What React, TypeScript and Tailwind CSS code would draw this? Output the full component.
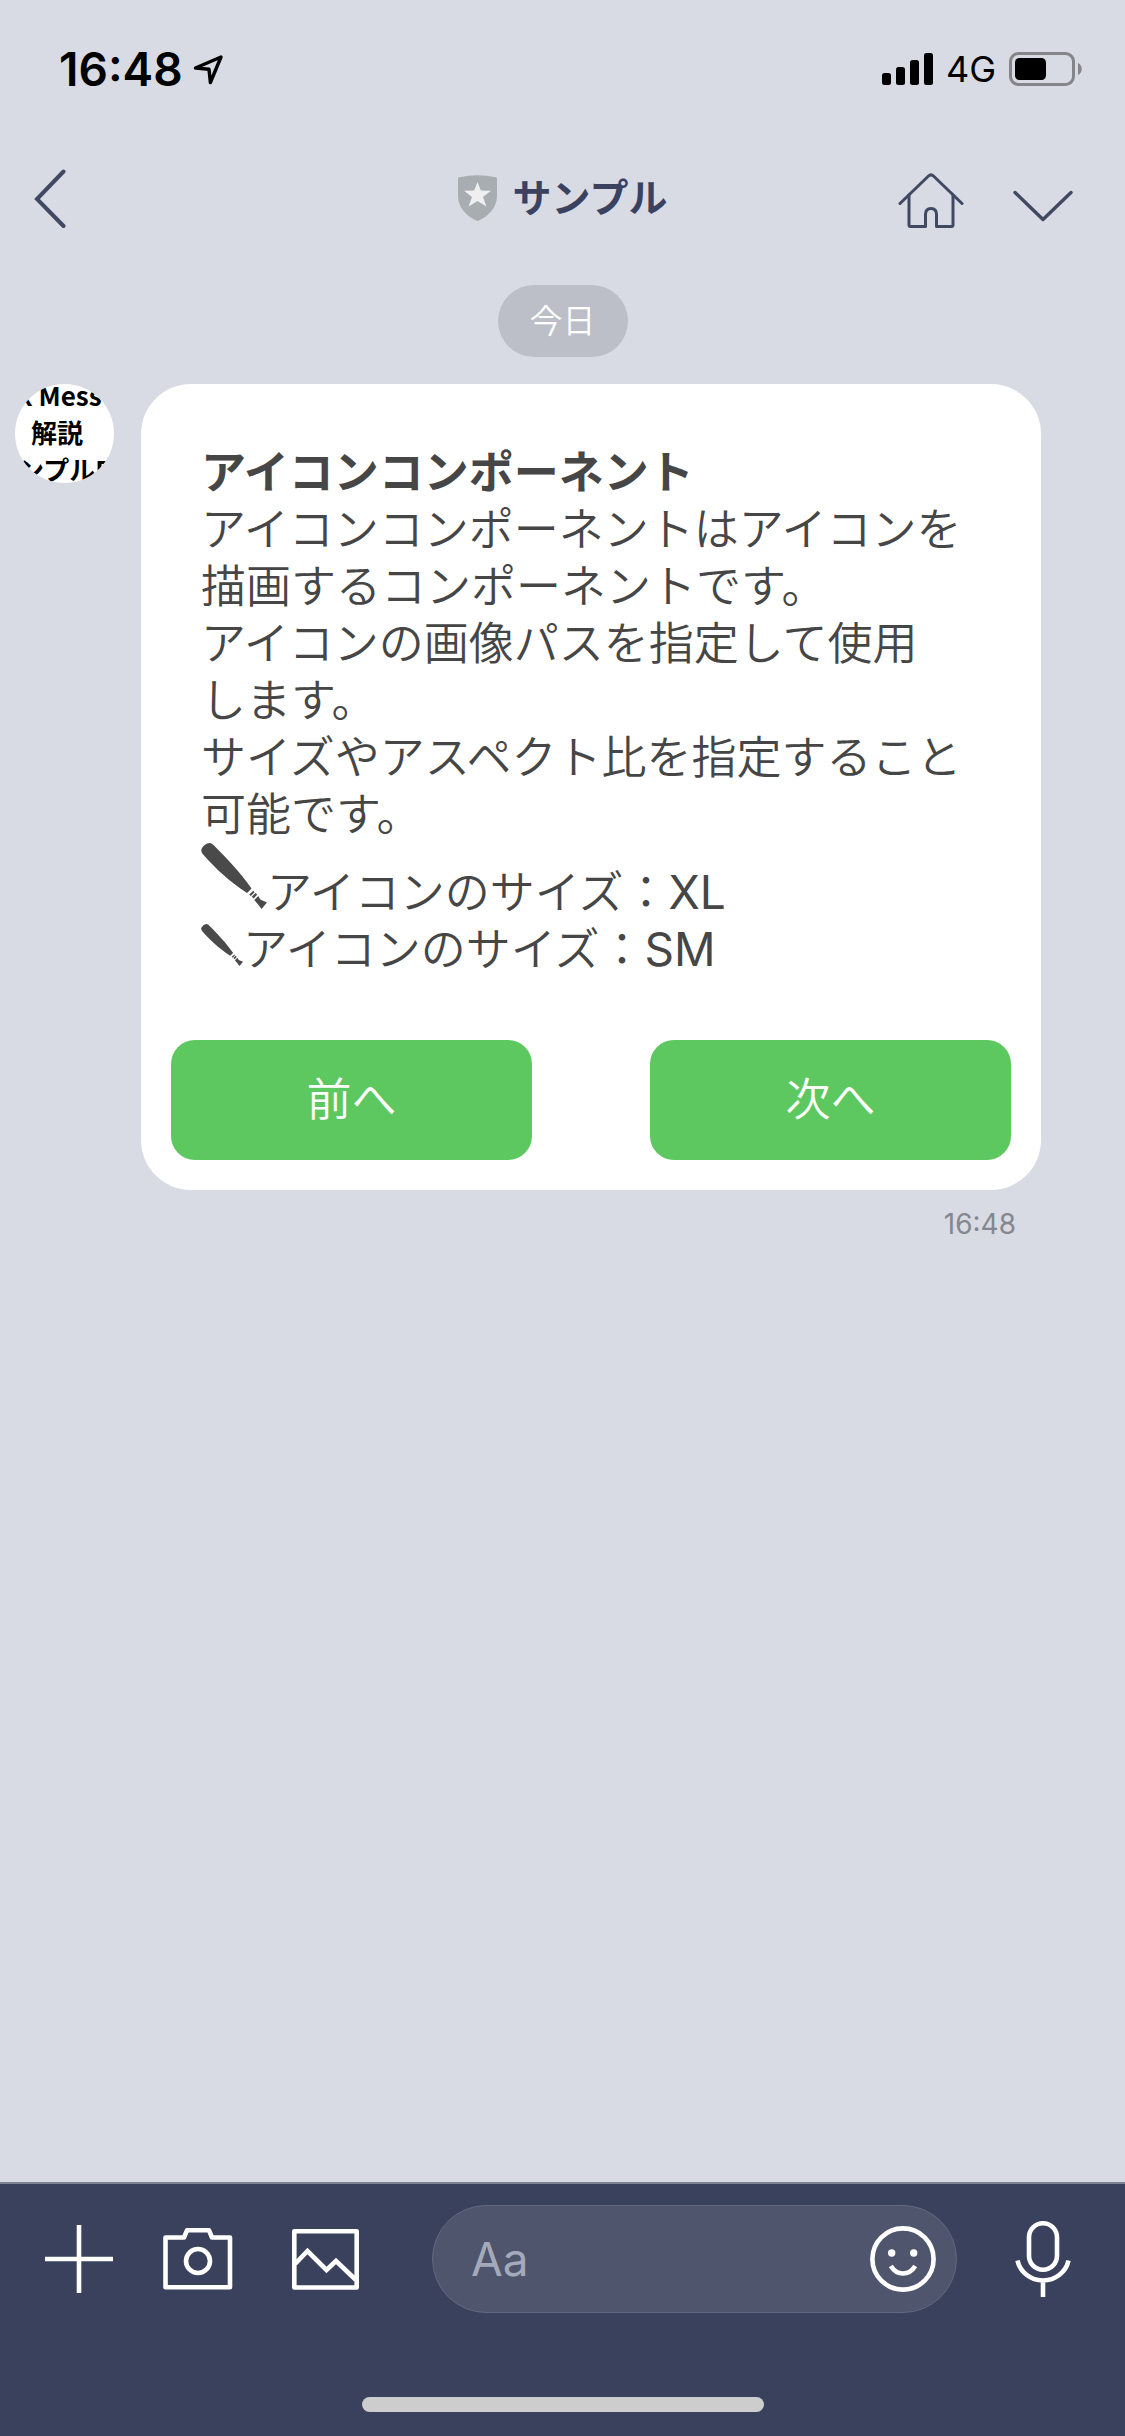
import type { ReactNode } from "react";

const LATIN_JP = "font-['Inter','Noto_Sans_CJK_JP',sans-serif]";

function LocationIcon() {
  return (
    <svg className="h-[31px] w-[31px]" viewBox="0 0 31 31" fill="none" stroke="#000" strokeWidth="3.4" strokeLinejoin="round" aria-hidden="true">
      <path d="M28 3 L2.500 14 L16 15.2 L17.4 28.500 Z" />
    </svg>
  );
}

function SignalIcon() {
  return (
    <svg className="h-[33px] w-[51px]" viewBox="0 0 51 33" aria-hidden="true">
      <rect x="0" y="20" width="9" height="12" rx="2.5" />
      <rect x="14" y="14" width="9" height="18" rx="2.5" />
      <rect x="28" y="7" width="9" height="25" rx="2.5" />
      <rect x="42" y="0" width="9" height="32" rx="2.5" />
    </svg>
  );
}

function BatteryIcon() {
  return (
    <svg className="h-[34px] w-[73px]" viewBox="0 0 73 34" aria-hidden="true">
      <rect x="1.5" y="1.5" width="63" height="31" rx="8" fill="none" stroke="#85868b" strokeWidth="3" />
      <rect x="6" y="6" width="31" height="22" rx="4.5" />
      <path d="M69 11 C74 13 74 21 69 23 Z" fill="#85868b" />
    </svg>
  );
}

function BackIcon() {
  return (
    <svg className="h-[60px] w-[32px]" viewBox="0 0 32 60" fill="none" stroke="#414862" strokeWidth="4" strokeLinecap="round" aria-hidden="true">
      <path d="M29.5 2.5 L3 30 L29.5 57" />
    </svg>
  );
}

function ShieldIcon() {
  return (
    <svg className="h-[46px] w-[39px]" viewBox="0 0 39 46" aria-hidden="true">
      <path d="M0 3.5 Q0 2.4 1.2 2.2 Q19.5 -1.8 37.8 2.2 Q39 2.4 39 3.5 V21 C39 33 30 41.5 19.5 46 C9 41.5 0 33 0 21 Z" fill="#a8adb1" />
      <path d="M19.5 7 L22.9 15.6 L33 15.8 L25 21.9 L28.4 31.5 L19.5 26.1 L10.6 31.5 L14 21.9 L6 15.8 L16.1 15.6 Z" fill="#efeff1" />
    </svg>
  );
}

function HomeIcon() {
  return (
    <svg className="h-[56px] w-[66px]" viewBox="0 0 66 56" fill="none" stroke="#414862" strokeWidth="3" strokeLinecap="round" strokeLinejoin="round" aria-hidden="true">
      <path d="M2 30.5 L30.5 3 Q33 0.7 35.5 3 L64 30.5" />
      <path d="M11 22 V52 Q11 53.5 12.5 53.5 H27.5 V41.5 Q27.5 35.5 33 35.5 Q38.5 35.5 38.5 41.5 V53.5 H53.5 Q55 53.5 55 52 V22" />
    </svg>
  );
}

function ChevronDownIcon() {
  return (
    <svg className="h-[32px] w-[60px]" viewBox="0 0 60 32" fill="none" stroke="#414862" strokeWidth="3.4" strokeLinecap="round" strokeLinejoin="round" aria-hidden="true">
      <path d="M2 2.5 L30 29.5 L58 2.5" />
    </svg>
  );
}

function BatIcon({ className }: { className: string }) {
  return (
    <svg className={"inline-block align-baseline " + className} viewBox="0 0 66 66" fill="#4a4a4a" aria-hidden="true">
      <path d="M3 12.5 Q-1 8.5 0.8 5.5 Q3.5 0.5 8.5 0 Q11 0 14 3.5 C28 18 39 29 50.5 45.5 L46 50 C28 38 15 26 3 12.5 Z" />
      <path d="M52.3 47.8 L53.6 49.2 L49.7 53 L48.3 51.6 Z" />
      <path d="M54.6 50 L56.2 51.8 L52.6 55.4 L50.8 53.6 Z" />
      <path d="M57.3 53 L59.3 56.6 L66 59.5 L60.5 66 L57.5 62 L53.3 57 Z" />
    </svg>
  );
}

function PlusIcon() {
  return (
    <svg className="size-[68px]" viewBox="0 0 68 68" stroke="#fff" strokeWidth="4.6" aria-hidden="true">
      <path d="M34 0 V68 M0 34 H68" />
    </svg>
  );
}

function CameraIcon() {
  return (
    <svg className="h-[62px] w-[70px]" viewBox="0 0 70 62" fill="none" stroke="#fff" strokeWidth="4.6" strokeLinejoin="round" aria-hidden="true">
      <path d="M2.5 9.5 H21 L24 2.3 H46 L49 9.5 H67 V59.3 H2.5 Z" />
      <circle cx="35" cy="33" r="12" />
    </svg>
  );
}

function PictureIcon() {
  return (
    <svg className="h-[61px] w-[67px]" viewBox="0 0 67 61" fill="none" stroke="#fff" strokeWidth="4.6" strokeLinejoin="round" aria-hidden="true">
      <path d="M2.3 2.3 H64.7 V58.5 H2.3 Z" />
      <path d="M3 35 L15.5 22 L34.5 41 L44 32 L64 51" strokeLinejoin="miter" />
    </svg>
  );
}

function SmileIcon() {
  return (
    <svg className="size-[66px]" viewBox="0 0 66 66" fill="none" stroke="#fff" strokeWidth="4.6" aria-hidden="true">
      <circle cx="33" cy="33" r="30.6" />
      <circle cx="21.7" cy="27" r="3.7" fill="#fff" stroke="none" />
      <circle cx="43.7" cy="27" r="3.7" fill="#fff" stroke="none" />
      <path d="M20.8 40 Q25.5 47.5 33 47.5 Q40.5 47.5 45.2 40" />
    </svg>
  );
}

function MicIcon() {
  return (
    <svg className="h-[76px] w-[56px]" viewBox="0 0 56 76" fill="none" stroke="#fff" strokeWidth="4.6" aria-hidden="true">
      <rect x="14" y="2.3" width="28" height="46.5" rx="14" />
      <path d="M2.500 39.500 C5 51 15.500 59.500 28 59.500 C40.500 59.500 51 51 53.500 39.500 M28 59.500 V76" />
    </svg>
  );
}

function StatusBar() {
  return (
    <div className="flex h-[132px] items-center justify-between pt-[6px] pr-[43px] pl-[59px]">
      <div className="flex items-center gap-[10px]">
        <time className="text-[46px] leading-[48px] font-semibold text-black">16:48</time>
        <LocationIcon />
      </div>
      <div className="flex items-center">
        <SignalIcon />
        <span className="ml-[13px] text-[36px] leading-[40px] text-black">4G</span>
        <span className="ml-[13px]">
          <BatteryIcon />
        </span>
      </div>
    </div>
  );
}

function ChatHeader() {
  return (
    <header className="grid h-[132px] grid-cols-[1fr_auto_1fr] items-center pr-[52px] pl-[34px]">
      <button type="button" aria-label="戻る" className="justify-self-start pt-[2px]">
        <BackIcon />
      </button>
      <div className="flex items-center gap-4 pl-[18px]">
        <ShieldIcon />
        <h1 className="text-[39px] leading-[48px] font-bold text-[#3a425f]">サンプル</h1>
      </div>
      <div className="flex items-center gap-[49px] justify-self-end">
        <button type="button" aria-label="ホーム" className="pt-[6px]">
          <HomeIcon />
        </button>
        <button type="button" aria-label="メニュー" className="pt-4">
          <ChevronDownIcon />
        </button>
      </div>
    </header>
  );
}

function Avatar() {
  return (
    <div className="ml-[15px] flex size-[99px] shrink-0 flex-col justify-center overflow-hidden rounded-full bg-white pb-1 font-['Noto_Sans_CJK_JP',sans-serif] text-[26px] leading-[37px] font-bold whitespace-nowrap text-black">
      <span className="pl-[3px]">x Mess</span>
      <span className="pl-4">解説</span>
      <span className="pl-[3px]">ンプルB</span>
    </div>
  );
}

function ActionButton({ children }: { children: ReactNode }) {
  return (
    <button type="button" className="h-[120px] w-[43%] rounded-3xl bg-[#5ec860] text-[45px] leading-[58px] font-[350] text-white">
      {children}
    </button>
  );
}

function MessageCard() {
  return (
    <article className="rounded-[50px] bg-white px-[30px] pt-[60px] pb-[30px]">
      <div className="px-[30px] text-[45px] leading-[57px] font-[350] text-[#464646]">
        <h2 className="font-bold">アイコンコンポーネント</h2>
        <p>
          アイコンコンポーネントはアイコンを
          <br />
          描画するコンポーネントです。
          <br />
          アイコンの画像パスを指定して使用
          <br />
          します。
          <br />
          サイズやアスペクト比を指定すること
          <br />
          可能です。
        </p>
        <p>
          <BatIcon className="size-[66px]" />
          アイコンのサイズ：<span className="text-[46px] font-normal">XL</span>
        </p>
        <p>
          <BatIcon className="size-[42px]" />
          アイコンのサイズ：<span className="text-[46px] font-normal">SM</span>
        </p>
      </div>
      <div className="mt-[62px] flex justify-between">
        <ActionButton>前へ</ActionButton>
        <ActionButton>次へ</ActionButton>
      </div>
    </article>
  );
}

function Composer() {
  return (
    <footer className="border-t-2 border-[#7d8293] bg-[#39415c] pt-[21px] pb-6">
      <div className="flex items-center pr-[54px] pl-[45px]">
        <button type="button" aria-label="追加">
          <PlusIcon />
        </button>
        <button type="button" aria-label="カメラ" className="ml-[50px]">
          <CameraIcon />
        </button>
        <button type="button" aria-label="写真" className="ml-[59px]">
          <PictureIcon />
        </button>
        <div className="ml-[73px] flex h-[108px] min-w-0 flex-1 items-center rounded-full border border-[#62687f] bg-[#4e556c] pr-5 pl-[38px]">
          <input
            type="text"
            aria-label="メッセージを入力"
            placeholder="Aa"
            className="min-w-0 flex-1 bg-transparent text-[46px] leading-[58px] text-white outline-none placeholder:text-[#a5aabb]"
          />
          <button type="button" aria-label="スタンプ">
            <SmileIcon />
          </button>
        </div>
        <button type="button" aria-label="音声メッセージ" className="ml-[58px]">
          <MicIcon />
        </button>
      </div>
      <div className="mx-auto mt-[84px] h-[15px] w-[402px] rounded-full bg-[#cdcdcd]" />
    </footer>
  );
}

export default function App() {
  return (
    <div className={"flex min-h-screen flex-col bg-[#d8dbe4] " + LATIN_JP} lang="ja">
      <StatusBar />
      <ChatHeader />
      <main className="flex flex-1 flex-col pt-[21px]">
        <div className="self-center rounded-full bg-[#bcbfc7] px-8 py-3 text-[33px] leading-[48px] font-[350] text-white">今日</div>
        <div className="mt-[27px] flex items-start gap-[27px]">
          <Avatar />
          <div className="w-4/5">
            <MessageCard />
            <p className="mt-4 pr-[25px] text-right text-[28px] leading-[36px] text-[#85878f]">16:48</p>
          </div>
        </div>
      </main>
      <Composer />
    </div>
  );
}
